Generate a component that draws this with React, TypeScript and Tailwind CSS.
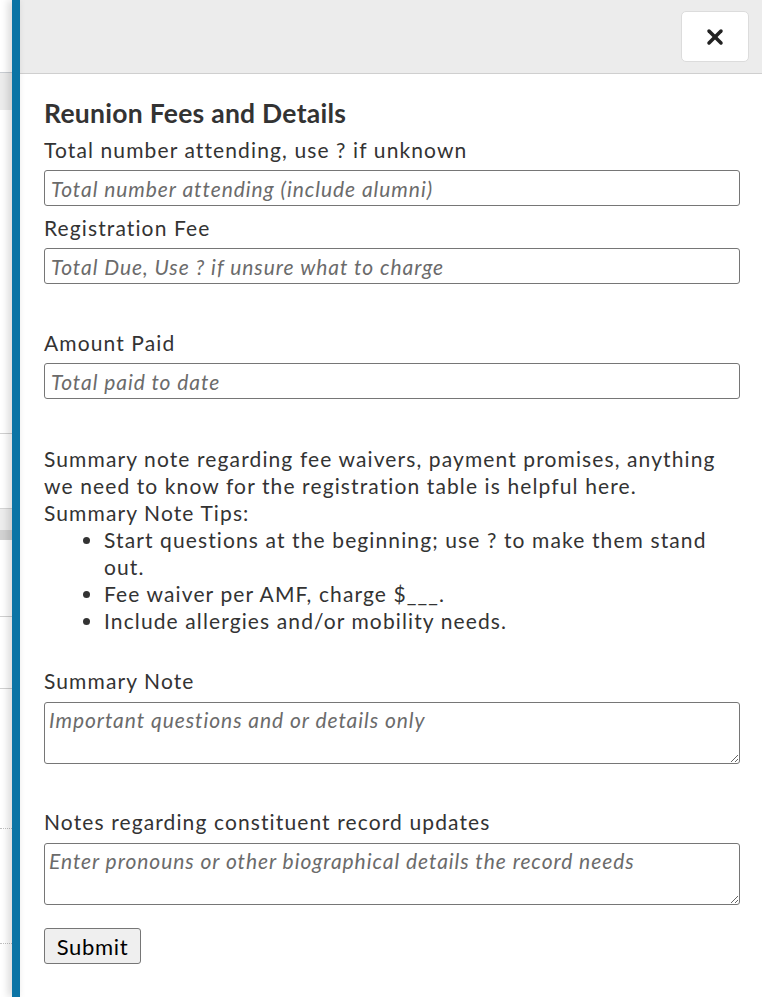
import { X } from "lucide-react";

const font = { fontFamily: "Lato, 'Open Sans', sans-serif" };

function Field({
  label,
  placeholder,
  className = "",
}: {
  label: string;
  placeholder: string;
  className?: string;
}) {
  return (
    <div className={className}>
      <label className="block text-[21px] leading-[28px] tracking-[0.053em] text-[#333]">{label}</label>
      <input
        placeholder={placeholder}
        className="mt-[6px] block h-[36px] w-full rounded-[3px] border border-[#767676] px-[6px] text-[21px] italic tracking-[0.045em] placeholder:text-[#6b6b6b] outline-none"
        style={font}
      />
    </div>
  );
}

function NoteArea({ label, placeholder }: { label: string; placeholder: string }) {
  return (
    <div>
      <label className="block text-[21px] leading-[28px] tracking-[0.053em] text-[#333]">{label}</label>
      <textarea
        placeholder={placeholder}
        className="mt-[7px] block h-[62px] w-full resize-y rounded-[3px] border border-[#767676] px-[4px] py-[3px] text-[21px] italic leading-[28px] tracking-[0.045em] placeholder:text-[#6b6b6b] outline-none"
        style={font}
      />
    </div>
  );
}

// page content peeking out behind the drawer
function BackdropStrip() {
  return (
    <div className="flex w-[12px] shrink-0 flex-col bg-white">
      <div className="h-[73px] border-b border-[#c9cdd2]" />
      <div className="h-[37px] bg-[#ececec]" />
      <div className="h-[324px] border-b border-[#d0d0d0]" />
      <div className="h-[74px]" />
      <div className="h-[22px] border-t border-[#d4d4d4] bg-[#ededed]" />
      <div className="h-[10px] bg-[#d2d2d2]" />
      <div className="h-[77px] border-b border-[#d0d0d0]" />
      <div className="h-[72px] border-b border-[#d0d0d0]" />
      <div className="h-[140px] border-b border-dotted border-[#c0c0c0]" />
      <div className="h-[115px] border-b border-dotted border-[#c0c0c0]" />
      <div className="flex-1" />
    </div>
  );
}

export default function App() {
  return (
    <div className="flex h-[997px] w-[762px] overflow-hidden bg-white" style={font}>
      <BackdropStrip />
      <div className="relative z-10 w-[8px] shrink-0 bg-[#0b74a5] shadow-[-3px_0_8px_rgba(0,0,0,0.18)]" />
      <div className="flex flex-1 flex-col">
        <div className="flex h-[74px] shrink-0 items-start justify-end border-b border-[#cfcfcf] bg-[#ececec] pr-[13px] pt-[11px]">
          <button className="flex h-[51px] w-[68px] items-center justify-center rounded-[5px] border border-[#dcdcdc] bg-white">
            <X className="h-[24px] w-[24px] text-[#222]" strokeWidth={3.5} />
          </button>
        </div>

        <form className="pl-[24px] pr-[22px] pt-[23px] text-[#333]">
          <h2 className="text-[26.5px] font-bold leading-[32px] tracking-[0.01em] text-[#333]">
            Reunion Fees and Details
          </h2>
          <Field
            className="mt-[7px]"
            label="Total number attending, use ? if unknown"
            placeholder="Total number attending (include alumni)"
          />
          <Field
            className="mt-[8px]"
            label="Registration Fee"
            placeholder="Total Due, Use ? if unsure what to charge"
          />
          <Field className="mt-[45px]" label="Amount Paid" placeholder="Total paid to date" />

          <div className="mt-[46px] text-[21px] leading-[27px] tracking-[0.053em] text-[#333]">
            <p>
              Summary note regarding fee waivers, payment promises, anything we need to know for the
              registration table is helpful here.
            </p>
            <p>Summary Note Tips:</p>
            <ul className="list-disc pl-[60px] pr-[20px]">
              <li>Start questions at the beginning; use ? to make them stand out.</li>
              <li>Fee waiver per AMF, charge $___.</li>
              <li>Include allergies and/or mobility needs.</li>
            </ul>
          </div>

          <div className="mt-[33px]">
            <NoteArea label="Summary Note" placeholder="Important questions and or details only" />
          </div>
          <div className="mt-[44px]">
            <NoteArea
              label="Notes regarding constituent record updates"
              placeholder="Enter pronouns or other biographical details the record needs"
            />
          </div>

          <button
            type="button"
            className="mt-[23px] h-[36px] w-[97px] rounded-[3px] border border-[#767676] bg-[#efefef] text-[22px] tracking-[0.03em] text-black"
          >
            Submit
          </button>
        </form>
      </div>
    </div>
  );
}
